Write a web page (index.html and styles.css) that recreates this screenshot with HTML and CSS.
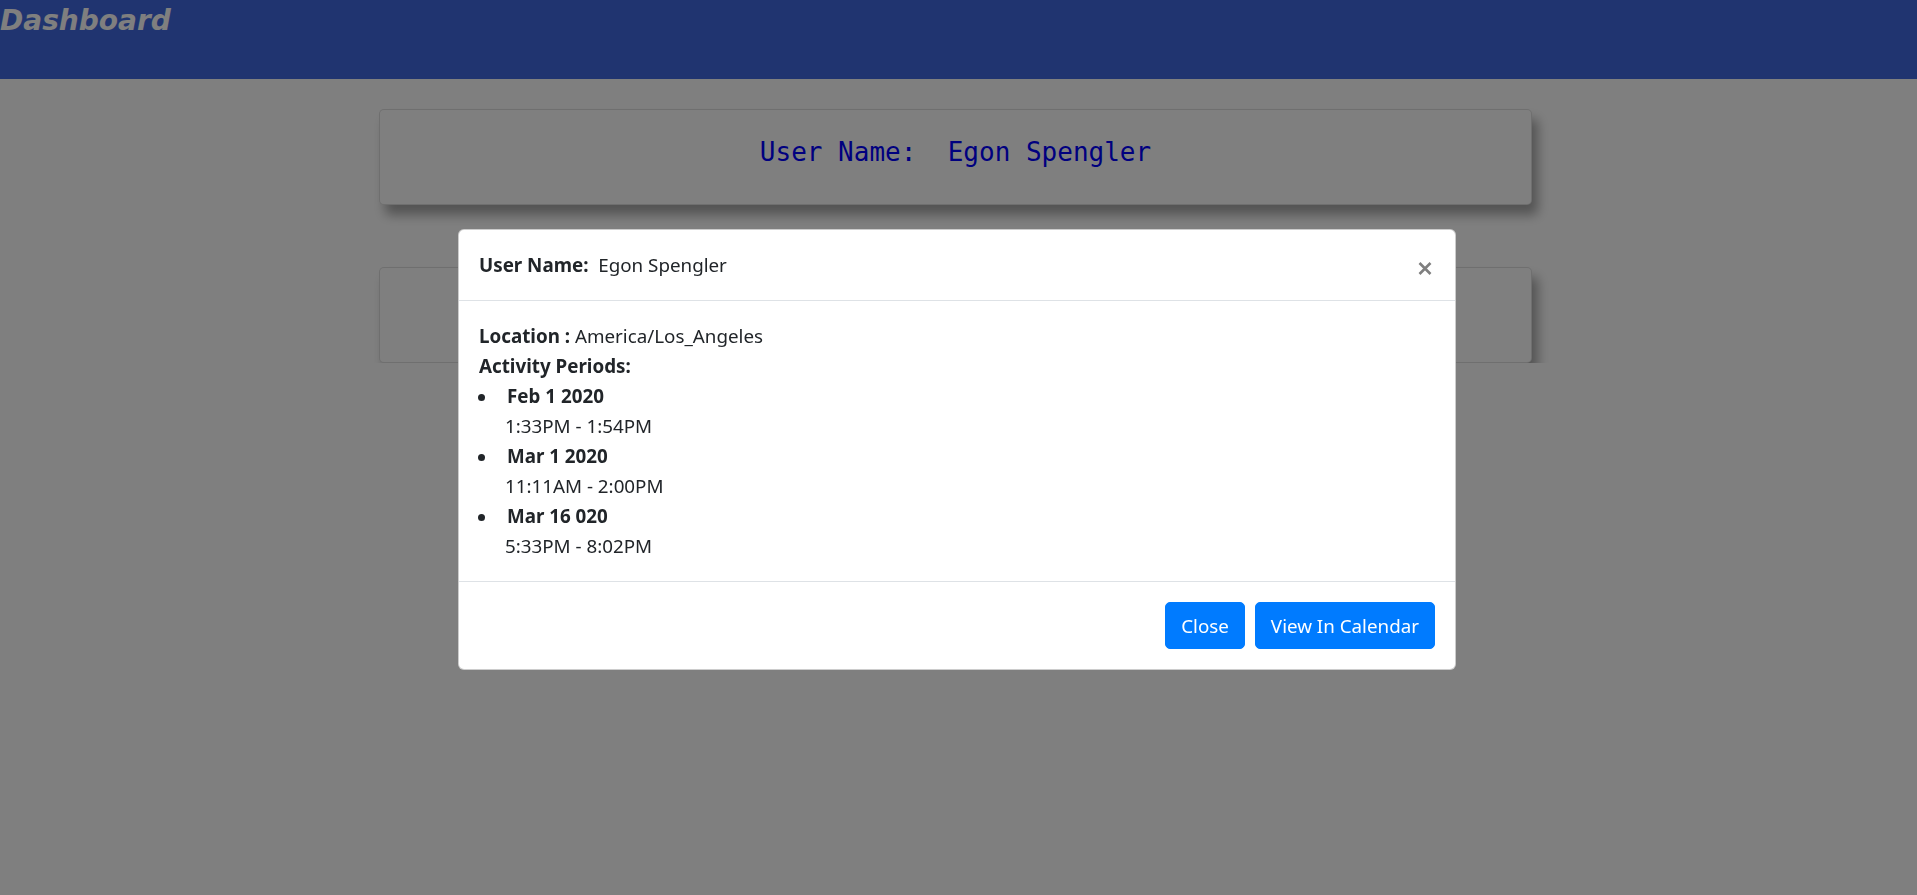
FILE: index.html
```html
<!DOCTYPE html>
<html lang="en">
<head>
<meta charset="utf-8">
<title>Dashboard</title>
<link rel="stylesheet" href="styles.css">
</head>
<body>
<header class="topbar">
  <h1 class="brand">Dashboard</h1>
</header>
<main class="content">
  <section class="card"><p class="card-text">User Name:  Egon Spengler</p></section>
  <section class="card"><p class="card-text">User Name:  Glinda Southgood</p></section>
</main>
<div class="backdrop"></div>
<div class="modal-layer">
  <div class="modal">
    <div class="modal-header">
      <div class="modal-title"><b>User Name:</b>&nbsp; Egon Spengler</div>
      <button class="close" type="button" aria-label="Close">
        <svg width="14" height="13" viewBox="0 0 14 13"><path d="M1.5 1 L12.5 12 M12.5 1 L1.5 12" stroke="#000" stroke-opacity=".5" stroke-width="2.6" fill="none"/></svg>
      </button>
    </div>
    <div class="modal-body">
      <div><b>Location :</b> America/Los_Angeles</div>
      <div><b>Activity Periods:</b></div>
      <ul class="periods">
        <li><b class="date">Feb 1 2020</b><br>1:33PM - 1:54PM</li>
        <li><b class="date">Mar 1 2020</b><br>11:11AM - 2:00PM</li>
        <li><b class="date">Mar 16 020</b><br>5:33PM - 8:02PM</li>
      </ul>
    </div>
    <div class="modal-footer">
      <button class="btn" type="button">Close</button>
      <button class="btn" type="button">View In Calendar</button>
    </div>
  </div>
</div>
</body>
</html>
```

FILE: styles.css
```css
* { box-sizing: border-box; }
body {
  margin: 0;
  background: #fff;
  font-family: "Noto Sans", "Open Sans", sans-serif;
}
.topbar {
  height: 79px;
  background: #4169e1;
}
.brand {
  margin: 0;
  padding-top: 4px;
  font: italic bold 28px/34px "DejaVu Sans", sans-serif;
  color: #fff;
}
.content {
  padding-top: 30px;
  padding-left: 379px;
  display: flex;
  flex-direction: column;
  gap: 62px;
}
.card {
  width: 1153px;
  height: 96px;
  background: #fff;
  border: 1px solid rgba(0,0,0,.125);
  border-radius: 5px;
  box-shadow: 6px 10px 12px rgba(0,0,0,.35);
  display: flex;
  align-items: center;
  justify-content: center;
}
.card-text {
  margin: 0;
  padding-bottom: 8px;
  font: 26px/1.2 "DejaVu Sans Mono", monospace;
  color: #0000ff;
  white-space: pre;
}
.backdrop {
  position: fixed;
  inset: 0;
  background: rgba(0,0,0,.5);
}
.modal-layer {
  position: fixed;
  inset: 0;
  display: flex;
  justify-content: center;
  align-items: flex-start;
}
.modal {
  width: 998px;
  margin: 229px 3px 0 0;
  background: #fff;
  border: 1px solid rgba(0,0,0,.2);
  border-radius: 6px;
  font-size: 18.8px;
  line-height: 30px;
  color: #212529;
}
.modal-header {
  display: flex;
  justify-content: space-between;
  align-items: flex-start;
  padding: 20px;
  border-bottom: 1px solid #dee2e6;
}
.modal-title b { font-weight: 700; }
.close {
  background: none;
  border: 0;
  padding: 0;
  margin: 12px 3px 0 0;
  line-height: 0;
  cursor: pointer;
}
.modal-body {
  padding: 20px;
}
.periods {
  margin: 0;
  padding-left: 26px;
  list-style: none;
}
.periods li::before {
  content: "";
  display: inline-block;
  width: 7px;
  height: 7px;
  border-radius: 50%;
  background: #212529;
  margin-left: -27px;
  margin-right: 20px;
  vertical-align: middle;
}
.date { margin-left: 2px; }
.modal-footer {
  display: flex;
  justify-content: flex-end;
  padding: 15px;
  border-top: 1px solid #dee2e6;
}
.btn {
  margin: 5px;
  padding: 7.5px 15px;
  font-family: inherit;
  font-size: 18.8px;
  line-height: 30px;
  color: #fff;
  background: #007bff;
  border: 1px solid #007bff;
  border-radius: 5px;
}
```
